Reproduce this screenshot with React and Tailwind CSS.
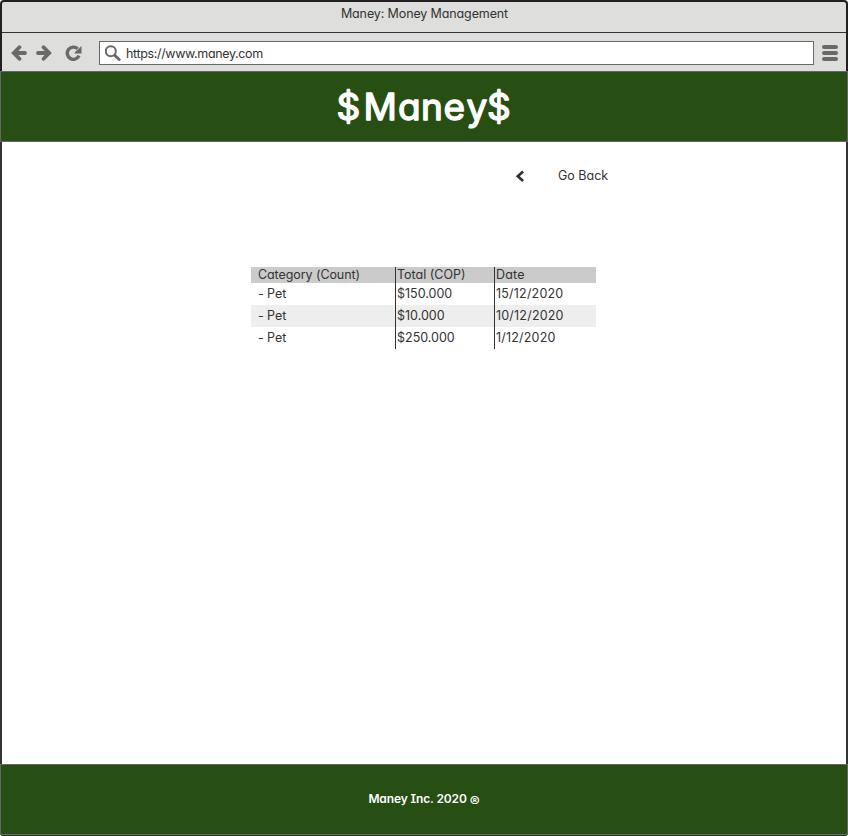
const rows = [
  ['- Pet', '$150.000', '15/12/2020'],
  ['- Pet', '$10.000', '10/12/2020'],
  ['- Pet', '$250.000', '1/12/2020'],
];

function Arrow({ className = '' }) {
  return (
    <svg className={className} width="16" height="16" viewBox="0 0 16 16" fill="none" stroke="#696969" strokeWidth="3.8" strokeLinecap="round">
      <path d="M4 8H14" />
      <path d="M8.4 2.2L2.8 8L8.4 13.8" strokeLinejoin="miter" />
    </svg>
  );
}

function Reload() {
  return (
    <svg width="17" height="16" viewBox="0 0 17 16">
      <path d="M14 10.6A6.1 6.1 0 1 1 12.6 3.8" fill="none" stroke="#696969" strokeWidth="3.4" />
      <path d="M16.5 1V8.6H9.6V7.4Z" fill="#696969" />
    </svg>
  );
}

function Search() {
  return (
    <svg width="17" height="17" viewBox="0 0 17 17" fill="none" stroke="#696969">
      <circle cx="5.8" cy="6.2" r="5" strokeWidth="2" />
      <path d="M9.8 10.4L14.2 14.5" strokeWidth="3" strokeLinecap="round" />
    </svg>
  );
}

function Menu() {
  return (
    <div className="flex w-4 flex-col gap-0.5">
      <div className="h-1 rounded-full bg-[#696969]" />
      <div className="h-1 rounded-full bg-[#696969]" />
      <div className="h-1 rounded-full bg-[#696969]" />
    </div>
  );
}

const columns = [
  'w-[144px] pl-[7px] tracking-[-0.08px]',
  'w-[99px] border-l border-[#333] pl-[1px]',
  'w-[102px] border-l border-[#333] pl-[1px] tracking-[0.2px]',
];

function Row({ cells, className }) {
  return (
    <div className={'flex ' + className}>
      {cells.map((cell, i) => (
        <div key={i} className={'flex items-center whitespace-nowrap ' + columns[i]}>{cell}</div>
      ))}
    </div>
  );
}

export default function App() {
  return (
    <div className="flex h-[836px] w-[848px] flex-col overflow-hidden bg-white font-['Inter','Liberation_Sans',sans-serif] text-[12.5px] leading-4 text-[#333] [font-feature-settings:'cv11','cv08']">
      <div className="flex h-[71px] flex-col rounded-t-sm border-x-2 border-t-2 border-[#231f20] bg-[#dededc]">
        <div className="flex h-[31px] justify-center border-b border-[#333] pt-1 pl-px">
          <span className="tracking-[-0.12px]">Maney: Money Management</span>
        </div>
        <div className="flex h-[38px] items-center pt-[2px] pl-[9px]">
          <Arrow />
          <Arrow className="ml-[9px] rotate-180" />
          <div className="ml-[13px]"><Reload /></div>
          <div className="ml-[17px] flex h-6 w-[715px] items-center border border-[#696969] bg-white pl-[5px]">
            <Search />
            <span className="ml-1 pt-0.5 tracking-[-0.35px]">https://www.maney.com</span>
          </div>
          <div className="ml-2"><Menu /></div>
        </div>
      </div>
      <header className="flex h-[71px] justify-center border border-[#666] bg-[#274e13]">
        <svg width="200" height="69" viewBox="0 0 200 69" role="heading">
          <text x="12.5 39.5 74 97 119.5 142.5 163" y="48" fontSize="37" fontWeight="400" fill="#fff" stroke="#fff" strokeWidth="1.4" strokeLinejoin="round">$Maney$</text>
        </svg>
      </header>
      <main className="flex flex-1 flex-col border-x-2 border-[#333]">
        <div className="mt-[26px] ml-[513px] flex h-4 items-center">
          <svg width="10" height="12" viewBox="0 0 10 12" fill="none" stroke="#333" strokeWidth="2.7"><path d="M8.1 1.4L2.8 6.2L8.1 11" /></svg>
          <span className="ml-[33px]">Go Back</span>
        </div>
        <div className="mt-[83px] ml-[249px] w-[345px]">
          <Row cells={['Category (Count)', 'Total (COP)', 'Date']} className="h-4 bg-[#cbcbcb]" />
          {rows.map((cells, i) => (
            <Row key={i} cells={cells} className={i === 1 ? 'h-[22px] bg-[#eee]' : 'h-[22px]'} />
          ))}
        </div>
      </main>
      <footer className="flex h-[71px] items-center justify-center border border-[#666] bg-[#274e13] pb-0.5 text-[12px] font-semibold text-white">
        <div className="flex items-center gap-[3px] tracking-[-0.12px]">
          <span>Maney Inc. 2020</span>
          <span className="pt-[5px] text-[15px] leading-none">®</span>
        </div>
      </footer>
      <div className="mx-px h-px bg-[#333]" />
    </div>
  );
}
